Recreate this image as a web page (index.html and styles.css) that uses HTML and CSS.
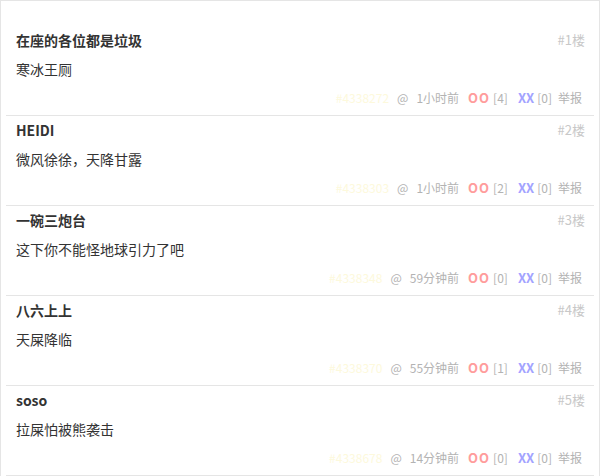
FILE: index.html
```html
<!DOCTYPE html>
<html lang="zh-CN">
<head>
<meta charset="utf-8">
<title>评论</title>
<link rel="stylesheet" href="styles.css">
</head>
<body>
<div class="box">
  <ul class="list">
    <li class="item">
      <div class="head"><span class="name">在座的各位都是垃圾</span><span class="floor">#1楼</span></div>
      <div class="text">寒冰王厕</div>
      <div class="foot"><span class="id">#4338272</span><span class="at">@</span><span class="time">1小时前</span><span class="oo">OO</span><span class="num">[4]</span><span class="xx">XX</span><span class="num">[0]</span><span class="report">举报</span></div>
    </li>
    <li class="item">
      <div class="head"><span class="name">HEIDI</span><span class="floor">#2楼</span></div>
      <div class="text">微风徐徐，天降甘露</div>
      <div class="foot"><span class="id">#4338303</span><span class="at">@</span><span class="time">1小时前</span><span class="oo">OO</span><span class="num">[2]</span><span class="xx">XX</span><span class="num">[0]</span><span class="report">举报</span></div>
    </li>
    <li class="item">
      <div class="head"><span class="name">一碗三炮台</span><span class="floor">#3楼</span></div>
      <div class="text">这下你不能怪地球引力了吧</div>
      <div class="foot"><span class="id">#4338348</span><span class="at">@</span><span class="time">59分钟前</span><span class="oo">OO</span><span class="num">[0]</span><span class="xx">XX</span><span class="num">[0]</span><span class="report">举报</span></div>
    </li>
    <li class="item">
      <div class="head"><span class="name">八六上上</span><span class="floor">#4楼</span></div>
      <div class="text">天屎降临</div>
      <div class="foot"><span class="id">#4338370</span><span class="at">@</span><span class="time">55分钟前</span><span class="oo">OO</span><span class="num">[1]</span><span class="xx">XX</span><span class="num">[0]</span><span class="report">举报</span></div>
    </li>
    <li class="item">
      <div class="head"><span class="name">soso</span><span class="floor">#5楼</span></div>
      <div class="text">拉屎怕被熊袭击</div>
      <div class="foot"><span class="id">#4338678</span><span class="at">@</span><span class="time">14分钟前</span><span class="oo">OO</span><span class="num">[0]</span><span class="xx">XX</span><span class="num">[0]</span><span class="report">举报</span></div>
    </li>
  </ul>
</div>
</body>
</html>
```
FILE: styles.css
```css
html, body {
  margin: 0;
  padding: 0;
  background: #fff;
}
body {
  font-family: "Noto Sans CJK SC", "Noto Sans", sans-serif;
  color: #333;
}
.box {
  width: 600px;
  border: 1px solid #e5e5e5;
  padding: 0 5px;
  box-sizing: border-box;
}
.list {
  list-style: none;
  margin: 0;
  padding: 25px 0 0;
}
.item {
  padding: 0 10px 3px;
  border-bottom: 1px solid #e5e5e5;
}
.head {
  display: flex;
  justify-content: space-between;
  align-items: center;
  height: 28px;
  line-height: 28px;
}
.name {
  font-size: 14px;
  font-weight: bold;
  color: #333;
}
.floor {
  font-size: 13px;
  color: #c8c8c8;
  margin-right: -1px;
}
.text {
  font-size: 14px;
  line-height: 30px;
  height: 30px;
  color: #333;
}
.foot {
  display: flex;
  justify-content: flex-end;
  align-items: center;
  height: 28px;
  line-height: 28px;
  font-size: 12px;
  color: #b3b3b3;
  padding-right: 2px;
}
.foot .id {
  color: #fdf9dc;
  margin-right: 8px;
}
.foot .at {
  margin-right: 8px;
}
.foot .time {
  margin-right: 9px;
}
.foot .oo {
  color: #ff9c9c;
  font-size: 13px;
  font-weight: bold;
  letter-spacing: 1px;
  margin-right: 3px;
}
.foot .xx {
  color: #a3a3ff;
  font-size: 13px;
  font-weight: bold;
  margin-left: 10px;
  margin-right: 3px;
}
.foot .report {
  margin-left: 6px;
}
```
